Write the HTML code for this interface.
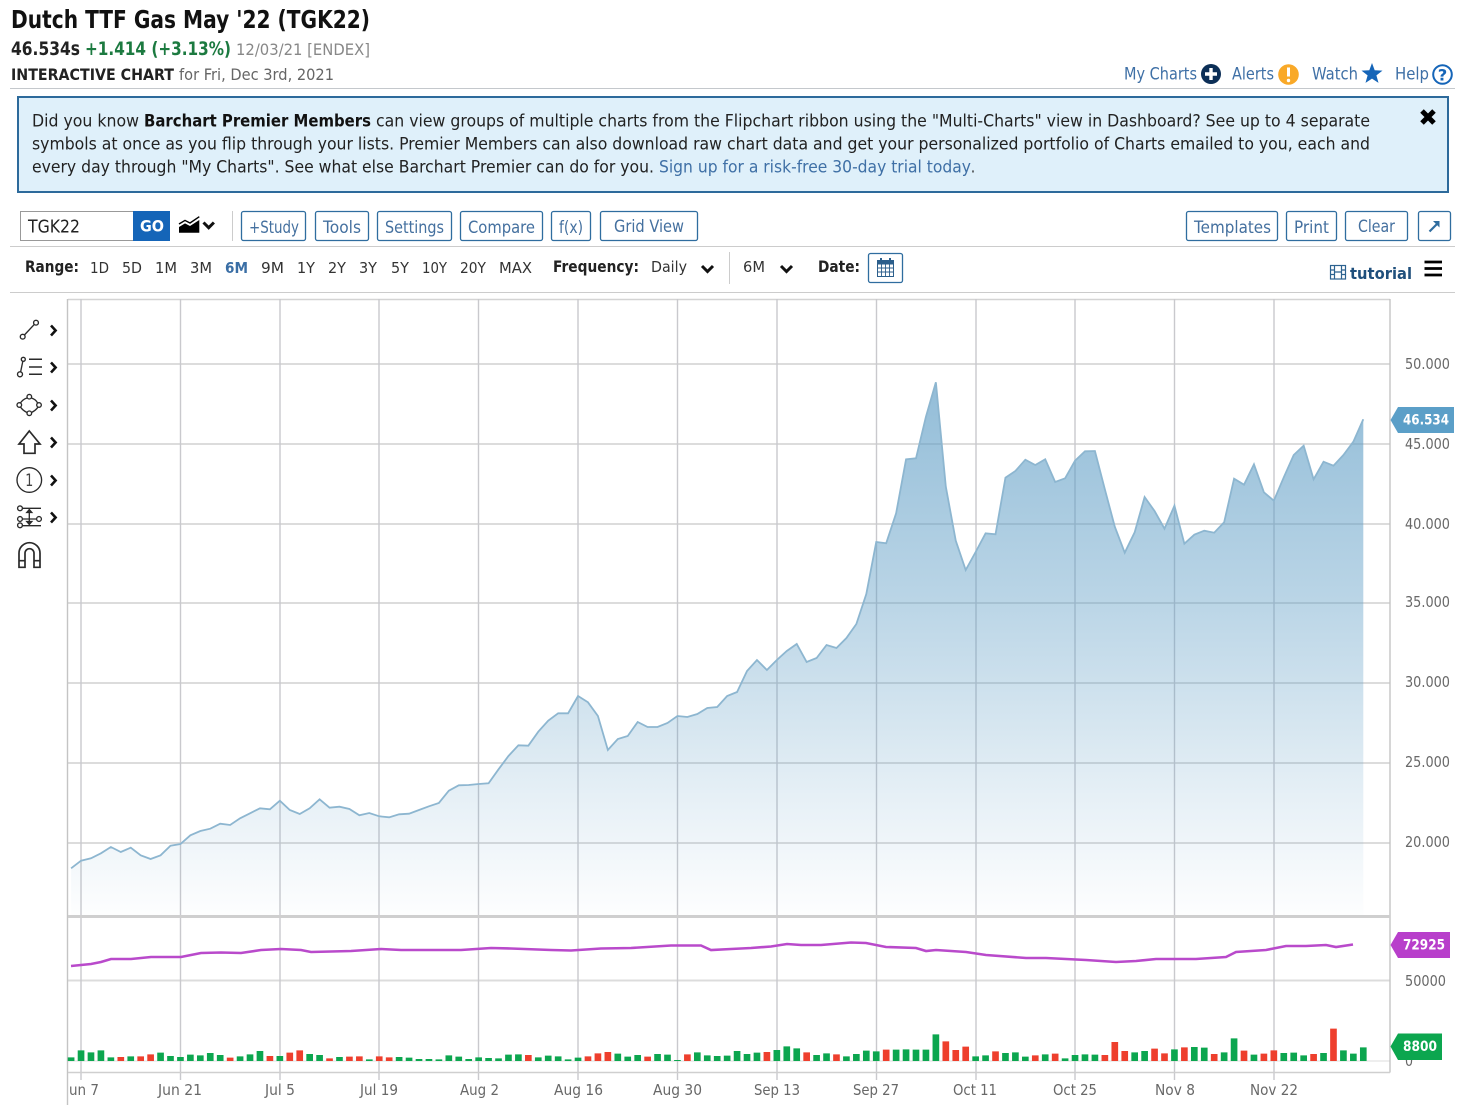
<!DOCTYPE html>
<html lang="en">
<head>
<meta charset="utf-8">
<title>Dutch TTF Gas May '22 (TGK22)</title>
<style>
html,body{margin:0;padding:0;background:#fff;width:1464px;height:1105px;overflow:hidden}
svg{display:block}
text{font-family:"DejaVu Sans","Liberation Sans",sans-serif;white-space:pre}
.b{font-weight:bold}
.btn{font-size:16.5px;fill:#44709f}
.bx{fill:#fff;stroke:#2f6d9f;stroke-width:1.3}
.rng{font-size:15.5px;fill:#333}
.ax{font-size:15px;fill:#686868}
.nt{font-size:16.5px;fill:#222}
.ic{fill:none;stroke:#2a2a2a;stroke-width:1.35}
.ch{fill:none;stroke:#111;stroke-width:2.6}
</style>
</head>
<body>
<svg xmlns="http://www.w3.org/2000/svg" width="1464" height="1105" viewBox="0 0 1464 1105">
<defs>
<linearGradient id="gf" gradientUnits="userSpaceOnUse" x1="0" y1="383" x2="0" y2="915">
<stop offset="0" stop-color="#5b9bc4" stop-opacity=".66"/>
<stop offset=".41" stop-color="#5b9bc4" stop-opacity=".42"/>
<stop offset=".78" stop-color="#5b9bc4" stop-opacity=".15"/>
<stop offset="1" stop-color="#5b9bc4" stop-opacity=".01"/>
</linearGradient>
</defs>

<!-- header -->
<text x="11" y="28" font-size="24.5" class="b" fill="#111" textLength="359" lengthAdjust="spacingAndGlyphs">Dutch TTF Gas May '22 (TGK22)</text>
<text x="11" y="55" font-size="19" class="b" fill="#222" textLength="69" lengthAdjust="spacingAndGlyphs">46.534s</text>
<text x="85" y="55" font-size="19" class="b" fill="#1c7a40" textLength="146" lengthAdjust="spacingAndGlyphs">+1.414 (+3.13%)</text>
<text x="236" y="55" font-size="16" fill="#888" textLength="134" lengthAdjust="spacingAndGlyphs">12/03/21 [ENDEX]</text>
<text x="11" y="80" font-size="16" class="b" fill="#222" textLength="163" lengthAdjust="spacingAndGlyphs">INTERACTIVE CHART</text>
<text x="179" y="80" font-size="16" fill="#666" textLength="155" lengthAdjust="spacingAndGlyphs">for Fri, Dec 3rd, 2021</text>

<text x="1124" y="79.500" font-size="16.5" fill="#3f70a6" textLength="73" lengthAdjust="spacingAndGlyphs">My Charts</text>
<circle cx="1211" cy="74" r="10" fill="#0c2f57"/><path d="M1205 74h12M1211 68v12" stroke="#fff" stroke-width="3.4" fill="none"/>
<text x="1232" y="79.500" font-size="16.5" fill="#3f70a6" textLength="42" lengthAdjust="spacingAndGlyphs">Alerts</text>
<circle cx="1288.500" cy="74.500" r="10.300" fill="#f9a928"/><path d="M1288.500 67.500v9" stroke="#fff" stroke-width="3"/><circle cx="1288.500" cy="80.500" r="1.700" fill="#fff"/>
<text x="1312" y="79.500" font-size="16.5" fill="#3f70a6" textLength="46" lengthAdjust="spacingAndGlyphs">Watch</text>
<polygon fill="#1565b8" points="1372,63 1374.7,70.3 1382.5,70.6 1376.4,75.4 1378.5,82.9 1372,78.6 1365.5,82.9 1367.6,75.4 1361.5,70.6 1369.3,70.3"/>
<text x="1395" y="79.500" font-size="16.5" fill="#3f70a6" textLength="34" lengthAdjust="spacingAndGlyphs">Help</text>
<circle cx="1442.500" cy="74.500" r="9.300" fill="#fff" stroke="#1565b8" stroke-width="2"/>
<text x="1437.800" y="80.500" font-size="16" class="b" fill="#1565b8" textLength="9.500" lengthAdjust="spacingAndGlyphs">?</text>
<rect x="10" y="88" width="1445" height="1" fill="#c4c8cc"/>

<!-- notice -->
<rect x="18" y="97" width="1430" height="95" fill="#dff0fa" stroke="#2d6a9b" stroke-width="2"/>
<text class="nt" x="32" y="126.500" textLength="107" lengthAdjust="spacingAndGlyphs">Did you know</text>
<text class="nt b" x="144" y="126.500" style="fill:#111" textLength="227" lengthAdjust="spacingAndGlyphs">Barchart Premier Members</text>
<text class="nt" x="376" y="126.500" textLength="994" lengthAdjust="spacingAndGlyphs">can view groups of multiple charts from the Flipchart ribbon using the "Multi-Charts" view in Dashboard? See up to 4 separate</text>
<text class="nt" x="32" y="149.500" textLength="1338" lengthAdjust="spacingAndGlyphs">symbols at once as you flip through your lists. Premier Members can also download raw chart data and get your personalized portfolio of Charts emailed to you, each and</text>
<text class="nt" x="32" y="172.500" textLength="622" lengthAdjust="spacingAndGlyphs">every day through "My Charts". See what else Barchart Premier can do for you.</text>
<text class="nt" x="659" y="172.500" style="fill:#3f70a6" textLength="312" lengthAdjust="spacingAndGlyphs">Sign up for a risk-free 30-day trial today</text>
<text class="nt" x="971" y="172.500" textLength="4" lengthAdjust="spacingAndGlyphs">.</text>
<path d="M1422 111l12 12M1434 111l-12 12" stroke="#000" stroke-width="5" fill="none"/>

<!-- toolbar -->
<rect x="20.500" y="211.500" width="113" height="29" fill="#fff" stroke="#999"/>
<text x="28" y="232.500" font-size="17.5" fill="#222" textLength="52" lengthAdjust="spacingAndGlyphs">TGK22</text>
<rect x="133" y="211" width="37" height="30" fill="#1565b8"/>
<text x="140" y="231.500" font-size="16" class="b" fill="#fff" textLength="24" lengthAdjust="spacingAndGlyphs">GO</text>
<path d="M179 232.700V227l6-3.600 5 2.600 9.300-6v12.700z" fill="#000"/>
<path d="M179 224l6-3.600 5 2.600 9.300-6.300" fill="none" stroke="#000" stroke-width="1.400"/>
<path d="M203.500 222.500l5.200 5.200 5.200-5.200" class="ch" style="stroke-width:3"/>
<rect x="232" y="211" width="1" height="30" fill="#ccc"/>

<rect class="bx" x="241.500" y="211.500" width="64" height="29" rx="2"/>
<text class="btn" x="249" y="233" textLength="50" lengthAdjust="spacingAndGlyphs">+Study</text>
<rect class="bx" x="315.500" y="211.500" width="53" height="29" rx="2"/>
<text class="btn" x="323" y="233" textLength="38" lengthAdjust="spacingAndGlyphs">Tools</text>
<rect class="bx" x="377.500" y="211.500" width="74" height="29" rx="2"/>
<text class="btn" x="385" y="233" textLength="59" lengthAdjust="spacingAndGlyphs">Settings</text>
<rect class="bx" x="460.500" y="211.500" width="82" height="29" rx="2"/>
<text class="btn" x="468" y="233" textLength="67" lengthAdjust="spacingAndGlyphs">Compare</text>
<rect class="bx" x="551.500" y="211.500" width="39" height="29" rx="2"/>
<text class="btn" x="559" y="233" textLength="24" lengthAdjust="spacingAndGlyphs">f(x)</text>
<rect class="bx" x="600.500" y="211.500" width="97" height="29" rx="2"/>
<text class="btn" x="614" y="232" textLength="70" lengthAdjust="spacingAndGlyphs">Grid View</text>

<rect class="bx" x="1186.500" y="211.500" width="91" height="29" rx="2"/>
<text class="btn" x="1194" y="233" textLength="77" lengthAdjust="spacingAndGlyphs">Templates</text>
<rect class="bx" x="1286.500" y="211.500" width="50" height="29" rx="2"/>
<text class="btn" x="1294" y="233" textLength="35" lengthAdjust="spacingAndGlyphs">Print</text>
<rect class="bx" x="1345.500" y="211.500" width="62" height="29" rx="2"/>
<text class="btn" x="1358" y="232" textLength="37" lengthAdjust="spacingAndGlyphs">Clear</text>
<rect class="bx" x="1418.500" y="211.500" width="32" height="29" rx="2"/>
<path d="M1429.500 231.500l8-8" stroke="#2f6d9f" stroke-width="2.200" fill="none"/>
<path d="M1433 221h6.500v6.500z" fill="#2f6d9f"/>
<rect x="10" y="246" width="1445" height="1" fill="#ccc"/>

<!-- range row -->
<text x="25" y="272" font-size="16" class="b" fill="#222" textLength="54" lengthAdjust="spacingAndGlyphs">Range:</text>
<text class="rng" x="90" y="273" textLength="19" lengthAdjust="spacingAndGlyphs">1D</text>
<text class="rng" x="122" y="273" textLength="20" lengthAdjust="spacingAndGlyphs">5D</text>
<text class="rng" x="155" y="273" textLength="22" lengthAdjust="spacingAndGlyphs">1M</text>
<text class="rng" x="190" y="273" textLength="22" lengthAdjust="spacingAndGlyphs">3M</text>
<text class="rng b" x="225" y="273" style="fill:#3a6ea5" textLength="23" lengthAdjust="spacingAndGlyphs">6M</text>
<text class="rng" x="261" y="273" textLength="23" lengthAdjust="spacingAndGlyphs">9M</text>
<text class="rng" x="297" y="273" textLength="18" lengthAdjust="spacingAndGlyphs">1Y</text>
<text class="rng" x="328" y="273" textLength="18" lengthAdjust="spacingAndGlyphs">2Y</text>
<text class="rng" x="359" y="273" textLength="18" lengthAdjust="spacingAndGlyphs">3Y</text>
<text class="rng" x="391" y="273" textLength="18" lengthAdjust="spacingAndGlyphs">5Y</text>
<text class="rng" x="422" y="273" textLength="25" lengthAdjust="spacingAndGlyphs">10Y</text>
<text class="rng" x="460" y="273" textLength="26" lengthAdjust="spacingAndGlyphs">20Y</text>
<text class="rng" x="499" y="273" textLength="33" lengthAdjust="spacingAndGlyphs">MAX</text>
<text x="553" y="272" font-size="16" class="b" fill="#222" textLength="86" lengthAdjust="spacingAndGlyphs">Frequency:</text>
<text class="rng" x="651" y="272" textLength="36" lengthAdjust="spacingAndGlyphs">Daily</text>
<path d="M702 266l5.500 5.500 5.500-5.500" class="ch" style="stroke-width:3"/>
<rect x="729" y="252" width="1" height="32" fill="#ccc"/>
<text class="rng" x="743" y="272" textLength="22" lengthAdjust="spacingAndGlyphs">6M</text>
<path d="M781 266l5.500 5.500 5.500-5.500" class="ch" style="stroke-width:3"/>
<text x="818" y="272" font-size="16" class="b" fill="#222" textLength="42" lengthAdjust="spacingAndGlyphs">Date:</text>
<rect class="bx" x="868.500" y="253.500" width="34" height="29" rx="2"/>
<rect x="877.500" y="261" width="16" height="15.500" fill="#fff" stroke="#2c5f8c"/>
<rect x="877" y="260" width="17" height="4.500" fill="#2c5f8c"/>
<path d="M881 258v4M890 258v4" stroke="#2c5f8c" stroke-width="2"/>
<path d="M877.500 268h16M877.500 272h16M881.500 264v12M885.500 264v12M889.500 264v12" stroke="#2c5f8c" stroke-width=".9" fill="none"/>
<rect x="1330.500" y="265.500" width="15" height="13.500" fill="none" stroke="#2c628f" stroke-width="1.200"/>
<path d="M1334.500 265.500v13.500M1341.500 265.500v13.500M1330.500 270h4M1330.500 274.500h4M1341.500 270h4M1341.500 274.500h4M1334.500 272h7" stroke="#2c628f" stroke-width="1.200" fill="none"/>
<text x="1350" y="279" font-size="16" class="b" fill="#1f4f7c" textLength="62" lengthAdjust="spacingAndGlyphs">tutorial</text>
<path d="M1424.500 262h17.500M1424.500 268.500h17.500M1424.500 275h17.500" stroke="#000" stroke-width="2.800" fill="none"/>
<rect x="10" y="292" width="1445" height="1" fill="#ccc"/>

<!-- chart grid -->
<path d="M68 299.500H1390" stroke="#d4d4d4" stroke-width="1.500" fill="none"/>
<path d="M68 364H1390M68 444H1390M68 524H1390M68 603H1390M68 683H1390M68 763H1390M68 843H1390M68 980.500H1390" stroke="#dcdcdc" stroke-width="2" fill="none"/>
<path d="M68 1061H1390" stroke="#dcdcdc" stroke-width="1" fill="none"/>
<path d="M81 299V1080M180.500 299V1080M280 299V1080M379 299V1080M478.500 299V1080M578 299V1080M677.500 299V1080M777 299V1080M876.500 299V1080M976 299V1080M1075 299V1080M1174.500 299V1080M1274 299V1080" stroke="#c9c9cd" stroke-width="1.400" fill="none"/>
<path d="M67.500 299V1105M1390 299V1072.500" stroke="#c4c4c4" stroke-width="1.400" fill="none"/>
<path d="M68 916.500H1390" stroke="#cfcfcf" stroke-width="3" fill="none"/>
<path d="M68 1072.500H1390" stroke="#cfcfcf" stroke-width="1.500" fill="none"/>

<!-- price area -->
<g transform="translate(71.1 0) scale(9.94 1)">
<polygon fill="url(#gf)" points="0,915 0,868.3 1,860.7 2,858.3 3,853.3 4,847 5,852 6,847.7 7,855.3 8,859 9,855.3 10,845.7 11,844 12,835.3 13,831 14,828.7 15,823.7 16,825 17,818.3 18,813.3 19,808.3 20,809.3 21,800.7 22,810 23,814 24,808.3 25,799.3 26,807.7 27,806.7 28,809 29,815.3 30,813 31,816.3 32,817.3 33,814.3 34,813.7 35,810 36,806.3 37,803 38,790.7 39,785.3 40,785 41,784 42,783.3 43,769.3 44,756 45,745.3 46,745.7 47,731.7 48,720.7 49,713.3 50,713.3 51,696 52,702.3 53,716 54,750 55,739 56,736 57,722 58,727 59,727 60,723 61,716 62,717 63,714 64,708 65,707 66,696 67,692 68,671 69,660 70,670 71,660 72,651 73,644 74,662 75,658 76,645 77,648 78,638 79,624 80,594 81,542 82,543.3 83,513.3 84,459.3 85,458.3 86,416.7 87,382.3 88,486.7 89,540.7 90,570 91,552 92,533.3 93,534.3 94,477.7 95,471 96,459.7 97,465 98,459.3 99,482 100,478.3 101,460.7 102,451.3 103,451 104,489.3 105,526.7 106,552.7 107,532.3 108,497 109,511 110,528.7 111,505.7 112,543.7 113,534.7 114,530.7 115,532.7 116,522.3 117,478.7 118,484.7 119,464.3 120,492.3 121,500.7 122,477.3 123,455 124,445.7 125,479.3 126,461.7 127,465.7 128,455 129,441.7 130,419.3 130,915"/>
<polyline fill="none" stroke="#8db6d0" stroke-width="1.800" vector-effect="non-scaling-stroke" points="0,868.3 1,860.7 2,858.3 3,853.3 4,847 5,852 6,847.7 7,855.3 8,859 9,855.3 10,845.7 11,844 12,835.3 13,831 14,828.7 15,823.7 16,825 17,818.3 18,813.3 19,808.3 20,809.3 21,800.7 22,810 23,814 24,808.3 25,799.3 26,807.7 27,806.7 28,809 29,815.3 30,813 31,816.3 32,817.3 33,814.3 34,813.7 35,810 36,806.3 37,803 38,790.7 39,785.3 40,785 41,784 42,783.3 43,769.3 44,756 45,745.3 46,745.7 47,731.7 48,720.7 49,713.3 50,713.3 51,696 52,702.3 53,716 54,750 55,739 56,736 57,722 58,727 59,727 60,723 61,716 62,717 63,714 64,708 65,707 66,696 67,692 68,671 69,660 70,670 71,660 72,651 73,644 74,662 75,658 76,645 77,648 78,638 79,624 80,594 81,542 82,543.3 83,513.3 84,459.3 85,458.3 86,416.7 87,382.3 88,486.7 89,540.7 90,570 91,552 92,533.3 93,534.3 94,477.7 95,471 96,459.7 97,465 98,459.3 99,482 100,478.3 101,460.7 102,451.3 103,451 104,489.3 105,526.7 106,552.7 107,532.3 108,497 109,511 110,528.7 111,505.7 112,543.7 113,534.7 114,530.7 115,532.7 116,522.3 117,478.7 118,484.7 119,464.3 120,492.3 121,500.7 122,477.3 123,455 124,445.7 125,479.3 126,461.7 127,465.7 128,455 129,441.7 130,419.3"/>
</g>

<!-- volume average line -->
<polyline fill="none" stroke="#b94acb" stroke-width="2.600" points="71,966 81,965 91,964 101,962 111,959 131,959 141,958 151,957 181,957 191,955 201,953 221,952.500 241,953 261,950 281,949 291,949.500 301,950 311,952 331,951.500 351,951 381,949 401,950 431,950 461,950 491,948 511,948.500 551,950 571,950.500 601,948.500 631,948 671,945.500 701,945.500 711,950 731,949 751,948 771,946.500 787,944 801,945 821,945 851,942.500 866,943 886,947 916,948 926,951 936,950 966,952 986,955 1026,958 1046,958 1066,959 1086,960 1116,962 1136,961 1156,959 1196,959 1226,957 1236,952 1266,950 1286,946 1306,946 1326,945 1336,947 1353,944.500"/>

<!-- volume bars -->
<g transform="translate(71.1 1061) scale(9.94 .3333)" fill="none" stroke-width=".67">
<path stroke="#0ca64f" d="M0 0V-11M1 0V-32M2 0V-26M3 0V-32M4 0V-11M6 0V-14M9 0V-25M10 0V-15M11 0V-12M12 0V-19M13 0V-17M14 0V-24M15 0V-18M17 0V-14M18 0V-20M19 0V-30M21 0V-15M24 0V-21M25 0V-18M27 0V-12M30 0V-5M33 0V-12M34 0V-10M35 0V-6M36 0V-6M37 0V-5M38 0V-17M39 0V-13M40 0V-6M41 0V-11M42 0V-9M43 0V-8M44 0V-19M45 0V-20M47 0V-11M48 0V-16M49 0V-14M50 0V-5M51 0V-10M55 0V-22M56 0V-13M57 0V-18M59 0V-21M60 0V-19M61 0V-3M63 0V-26M64 0V-17M65 0V-15M66 0V-16M67 0V-30M68 0V-21M69 0V-25M71 0V-33M72 0V-44M73 0V-38M75 0V-18M76 0V-23M78 0V-14M79 0V-21M80 0V-31M81 0V-29M83 0V-34M84 0V-35M85 0V-34M86 0V-34M87 0V-80M91 0V-14M92 0V-17M94 0V-24M95 0V-26M96 0V-13M98 0V-20M100 0V-8M101 0V-18M102 0V-20M103 0V-19M107 0V-26M108 0V-30M111 0V-35M113 0V-42M114 0V-40M116 0V-26M117 0V-68M119 0V-19M122 0V-24M123 0V-25M124 0V-17M126 0V-24M128 0V-32M129 0V-22M130 0V-41"/>
<path stroke="#ee3f2d" d="M5 0V-12M7 0V-14M8 0V-20M16 0V-10M20 0V-15M22 0V-25M23 0V-32M26 0V-8M28 0V-13M29 0V-14M31 0V-14M32 0V-11M46 0V-18M52 0V-14M53 0V-23M54 0V-27M58 0V-13M62 0V-20M70 0V-27M74 0V-26M77 0V-20M82 0V-34M88 0V-59M89 0V-33M90 0V-43M93 0V-29M97 0V-17M99 0V-22M104 0V-18M105 0V-57M106 0V-30M109 0V-37M110 0V-23M112 0V-41M115 0V-21M118 0V-31M120 0V-22M121 0V-32M125 0V-21M127 0V-97"/>
</g>

<!-- right axis -->
<text class="ax" x="1405" y="369" textLength="45" lengthAdjust="spacingAndGlyphs">50.000</text>
<text class="ax" x="1405" y="449" textLength="45" lengthAdjust="spacingAndGlyphs">45.000</text>
<text class="ax" x="1405" y="529" textLength="45" lengthAdjust="spacingAndGlyphs">40.000</text>
<text class="ax" x="1405" y="607" textLength="45" lengthAdjust="spacingAndGlyphs">35.000</text>
<text class="ax" x="1405" y="687" textLength="45" lengthAdjust="spacingAndGlyphs">30.000</text>
<text class="ax" x="1405" y="767" textLength="45" lengthAdjust="spacingAndGlyphs">25.000</text>
<text class="ax" x="1405" y="847" textLength="45" lengthAdjust="spacingAndGlyphs">20.000</text>
<text class="ax" x="1405" y="986" textLength="41" lengthAdjust="spacingAndGlyphs">50000</text>
<text class="ax" x="1405" y="1066" textLength="8" lengthAdjust="spacingAndGlyphs">0</text>

<polygon points="1390.5,420 1398,407 1454,407 1454,433 1398,433" fill="#5b9fc8"/>
<text x="1403" y="424.500" font-size="14.5" class="b" fill="#fff" textLength="46" lengthAdjust="spacingAndGlyphs">46.534</text>
<polygon points="1390.5,945 1398,932 1450,932 1450,958 1398,958" fill="#b83fcb"/>
<text x="1403" y="949.500" font-size="14.5" class="b" fill="#fff" textLength="42" lengthAdjust="spacingAndGlyphs">72925</text>
<polygon points="1390.5,1046.5 1398,1033.5 1442,1033.5 1442,1060 1398,1060" fill="#0ca64f"/>
<text x="1403" y="1051" font-size="14.5" class="b" fill="#fff" textLength="34" lengthAdjust="spacingAndGlyphs">8800</text>

<!-- bottom axis -->
<text class="ax" x="69" y="1095" textLength="30" lengthAdjust="spacingAndGlyphs">un 7</text>
<text class="ax" x="158" y="1095" textLength="44" lengthAdjust="spacingAndGlyphs">Jun 21</text>
<text class="ax" x="265" y="1095" textLength="30" lengthAdjust="spacingAndGlyphs">Jul 5</text>
<text class="ax" x="360" y="1095" textLength="38" lengthAdjust="spacingAndGlyphs">Jul 19</text>
<text class="ax" x="460" y="1095" textLength="39" lengthAdjust="spacingAndGlyphs">Aug 2</text>
<text class="ax" x="554" y="1095" textLength="49" lengthAdjust="spacingAndGlyphs">Aug 16</text>
<text class="ax" x="653" y="1095" textLength="49" lengthAdjust="spacingAndGlyphs">Aug 30</text>
<text class="ax" x="754" y="1095" textLength="46" lengthAdjust="spacingAndGlyphs">Sep 13</text>
<text class="ax" x="853" y="1095" textLength="46" lengthAdjust="spacingAndGlyphs">Sep 27</text>
<text class="ax" x="953" y="1095" textLength="44" lengthAdjust="spacingAndGlyphs">Oct 11</text>
<text class="ax" x="1053" y="1095" textLength="44" lengthAdjust="spacingAndGlyphs">Oct 25</text>
<text class="ax" x="1155" y="1095" textLength="40" lengthAdjust="spacingAndGlyphs">Nov 8</text>
<text class="ax" x="1250" y="1095" textLength="48" lengthAdjust="spacingAndGlyphs">Nov 22</text>

<!-- drawing tools -->
<g class="ic">
<path d="M24.400 335l9.900-10.600"/><circle cx="22.700" cy="336.700" r="2.400"/><circle cx="36" cy="322.700" r="2.400"/>
<path d="M20.600 372l2.200-10.600"/><circle cx="20" cy="374.300" r="2.500"/><circle cx="23.300" cy="359.300" r="2"/>
<path d="M29 359.300h13M29 367h13M29 374.300h13" style="stroke-width:1.500"/>
<path d="M27 398c-3 1-5 2.500-6.500 5M31.500 398c3 1 5 2.500 6 5M20.500 407c1.500 2.500 3.500 4 6.500 5.500M38 407c-1.500 2.500-3.500 4-6.500 5.500"/>
<circle cx="29.300" cy="396.700" r="2.300"/><circle cx="19.300" cy="405" r="2.300"/><circle cx="39" cy="405" r="2.300"/><circle cx="29.300" cy="413.300" r="2.300"/>
<path d="M29.300 431l10.700 13h-5v9.300H24V444h-5z" style="stroke-width:1.700"/>
<circle cx="29.300" cy="480" r="12.300"/>
<path d="M22.500 508.300H41M22.500 525.700H41M23 519h13.500M29.300 511.500v11"/>
<path d="M29.300 509.500l-2.500 3h5zM29.300 524.500l-2.500-3h5z" fill="#333"/>
<circle cx="20" cy="508.300" r="2.400"/><circle cx="20" cy="519" r="2.400"/><circle cx="20" cy="525.300" r="2.400"/><circle cx="39" cy="519" r="2.400"/>
<path d="M19 567.300V553.200a10.500 10.500 0 0 1 21 0v14.100h-6v-14.100a4.500 4.500 0 0 0-9 0v14.100zM19 560.700h6M34 560.700h6" style="stroke-width:1.700"/>
</g>
<text x="25.300" y="486" font-size="16.500" fill="#444" textLength="8" lengthAdjust="spacingAndGlyphs">1</text>
<path d="M51 325.500l4.600 5-4.600 5M51 362.500l4.600 5-4.600 5M51 400.500l4.600 5-4.600 5M51 437.500l4.600 5-4.600 5M51 475.500l4.600 5-4.600 5M51 512.500l4.600 5-4.600 5" class="ch"/>
</svg>
</body>
</html>
